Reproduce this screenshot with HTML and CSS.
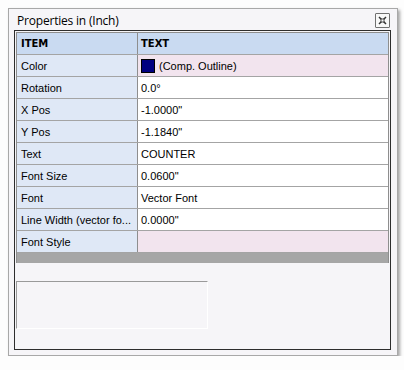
FILE: index.html
```html
<!DOCTYPE html>
<html lang="en">
<head>
  <meta charset="UTF-8" />
  <title>Properties</title>
  <link rel="stylesheet" href="styles.css">
</head>
<body>
  <div class="window">
    <div class="titlebar">
      <span class="title">Properties in (Inch)</span>
      <span class="close">
        <svg width="9" height="9" viewBox="0 0 9 9">
          <path d="M1 1 L8 8 M8 1 L1 8" stroke="#333" stroke-width="1.5" fill="none"/>
          <rect x="3" y="3" width="3" height="3" fill="#f8f8f8" stroke="#333" stroke-width="0.8"/>
        </svg>
      </span>
    </div>

    <div class="frame">
      <div class="grid">
        <div class="row head">
          <div class="cell key">ITEM</div>
          <div class="cell val">TEXT</div>
        </div>
        <div class="row">
          <div class="cell key">Color</div>
          <div class="cell val pink"><span class="swatch"></span>(Comp. Outline)</div>
        </div>
        <div class="row">
          <div class="cell key">Rotation</div>
          <div class="cell val">0.0°</div>
        </div>
        <div class="row">
          <div class="cell key">X Pos</div>
          <div class="cell val">-1.0000"</div>
        </div>
        <div class="row">
          <div class="cell key">Y Pos</div>
          <div class="cell val">-1.1840"</div>
        </div>
        <div class="row">
          <div class="cell key">Text</div>
          <div class="cell val">COUNTER</div>
        </div>
        <div class="row">
          <div class="cell key">Font Size</div>
          <div class="cell val">0.0600"</div>
        </div>
        <div class="row">
          <div class="cell key">Font</div>
          <div class="cell val">Vector Font</div>
        </div>
        <div class="row">
          <div class="cell key">Line Width (vector fo...</div>
          <div class="cell val">0.0000"</div>
        </div>
        <div class="row">
          <div class="cell key">Font Style</div>
          <div class="cell val pink"></div>
        </div>
        <div class="bar"></div>
      </div>

      <div class="panel"></div>
    </div>
  </div>
</body>
</html>
```

FILE: styles.css
```css
body {
  margin: 0;
  background: #fdfdfd;
  font-family: 'Liberation Sans', sans-serif;
  font-size: 11px;
  color: #000;
}

.window {
  margin: 8px 0 0 8px;
  width: 390px;
  height: 348px;
  border: 1px solid #a8a8a8;
  background: #f6f5f8;
  box-shadow: 2px 2px 3px rgba(0, 0, 0, 0.35);
  padding: 0 6px 0 5px;
  box-sizing: border-box;
}

.titlebar {
  height: 21px;
  display: flex;
  align-items: center;
  justify-content: space-between;
  padding: 0 1px 0 3px;
}

.title {
  font-family: 'Open Sans', sans-serif;
  font-size: 12px;
  margin-top: 1px;
  letter-spacing: -0.2px;
}

.close {
  width: 13px;
  height: 13px;
  border: 1px solid #707070;
  border-radius: 1px;
  background: #f8f8f8;
  display: flex;
  align-items: center;
  justify-content: center;
  margin-top: 1px;
}

.frame {
  height: 320px;
  border: 1px solid #2d2d2d;
  padding: 1px 1px 0 1px;
  box-sizing: border-box;
}

.grid {
  border: 1px solid #8e8e8e;
  border-bottom: none;
  background: #fff;
}

.row {
  display: grid;
  grid-template-columns: 121px 1fr;
  height: 22px;
  border-bottom: 1px solid #a4a4a4;
  box-sizing: border-box;
}

.row.head {
  background: #c9daf1;
  font-weight: bold;
}

.cell {
  display: flex;
  align-items: center;
  padding-left: 3px;
  white-space: nowrap;
  overflow: hidden;
  min-width: 0;
}

.cell.key {
  padding-left: 4px;
  background: #dfe8f6;
  border-right: 1px solid #8e8e8e;
}

.head .cell {
  background: #c9daf1;
  font-family: 'DejaVu Sans', sans-serif;
  font-size: 10px;
}

.cell.pink {
  background: #f2e4ee;
}

.swatch {
  width: 12px;
  height: 12px;
  background: #000080;
  border: 1px solid #000;
  margin-right: 4px;
}

.bar {
  height: 10px;
  background: #a6a6a6;
}

.panel {
  width: 190px;
  height: 46px;
  margin-top: 18px;
  border-top: 1px solid #9a9a9a;
  border-left: 1px solid #9a9a9a;
  border-right: 1px solid #fff;
  border-bottom: 1px solid #fff;
}
```
